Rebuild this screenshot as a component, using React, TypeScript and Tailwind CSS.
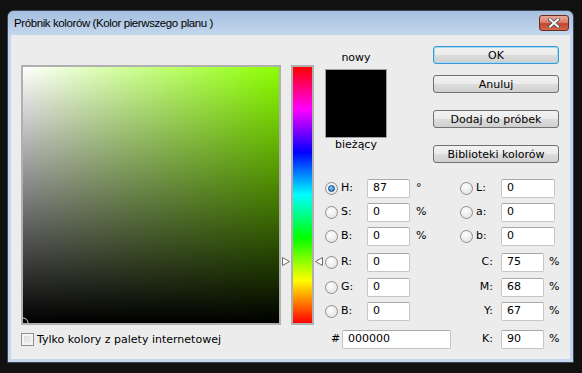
import React from 'react';

const font = { fontFamily: '"DejaVu Sans", Tahoma, sans-serif' };
const titleFont = { fontFamily: '"Liberation Sans", Arial, sans-serif' };

function Radio({ checked = false }: { checked?: boolean }) {
  return (
    <span className="w-[13px] h-[13px] rounded-full border border-[#8f8f8f] bg-[radial-gradient(circle_at_40%_35%,#ffffff,#dcdcdc)] flex items-center justify-center shrink-0">
      {checked && <span className="w-[7px] h-[7px] rounded-full bg-[radial-gradient(circle_at_40%_35%,#8fd3ff,#1565b8)] border border-[#0d4a8a]" />}
    </span>
  );
}

function Field({ value, w = 43 }: { value: string; w?: number }) {
  return (
    <div
      className="h-[19px] bg-white border border-[#c6c6c6] border-t-[#a8a8a8] rounded-[2px] flex items-center pl-[5px] text-black"
      style={{ width: w }}
    >
      {value}
    </div>
  );
}

function Button({ label, focused = false, mt }: { label: string; focused?: boolean; mt: string }) {
  return (
    <div
      className={`${mt} w-[126px] h-[18px] rounded-[3px] border ${focused ? 'border-[#3c9ad4] shadow-[inset_0_0_0_1px_#9fd9f6]' : 'border-[#707070]'} bg-[linear-gradient(to_bottom,#f2f2f2_0%,#ebebeb_50%,#dddddd_51%,#cfcfcf_100%)] flex items-center justify-center text-black leading-none`}
    >
      {label}
    </div>
  );
}

export default function App() {
  return (
    <div className="w-[582px] h-[373px] bg-[#111111] pl-[8px] pt-[11px]" style={font}>
      <div className="w-[565px] h-[351px] rounded-t-[6px] bg-[#c3d7ee] flex flex-col shadow-[0_0_0_1px_#3a4656]">
        {/* Title bar */}
        <div className="h-[24px] rounded-t-[6px] bg-[linear-gradient(to_bottom,#a4bfdd,#b7cde7_60%,#c3d7ee)] flex items-start justify-between pl-[6px] pr-[4px]">
          <span className="text-[11.5px] tracking-[-0.4px] text-black mt-[5px] leading-[14px]" style={titleFont}>Próbnik kolorów (Kolor pierwszego planu )</span>
          <div className="mt-[4px] w-[30px] h-[16px] rounded-[3px] border border-[#6d2a20] bg-[linear-gradient(to_bottom,#e7a897_0%,#d9806b_45%,#c3452d_55%,#cf6a50_100%)] flex items-center justify-center">
            <svg width="12" height="10" viewBox="0 0 12 10">
              <path d="M2 1.5 L10 8.5 M10 1.5 L2 8.5" stroke="#4a4a4a" strokeWidth="3.6" strokeLinecap="square" />
              <path d="M2 1.5 L10 8.5 M10 1.5 L2 8.5" stroke="#ffffff" strokeWidth="2" strokeLinecap="square" />
            </svg>
          </div>
        </div>

        {/* Client */}
        <div className="mx-[3px] h-[324px] bg-[#ececec] flex text-[11px] text-black">
          {/* Color field */}
          <div className="ml-[10px] pt-[30px] flex flex-col">
            <div className="w-[260px] h-[260px] border-2 border-[#b0b0b0] relative overflow-hidden bg-[linear-gradient(to_top,#000000,rgba(0,0,0,0)),linear-gradient(to_right,#ffffff,#8cff00)]">
              <svg className="absolute left-[-6px] bottom-[-6px]" width="12" height="12" viewBox="0 0 12 12">
                <circle cx="6" cy="6" r="5" fill="none" stroke="#d8d8d8" strokeWidth="1" />
              </svg>
            </div>
            <div className="mt-[8px] flex items-center gap-[3px]">
              <span className="w-[13px] h-[13px] border border-[#8f8f8f] bg-[linear-gradient(to_bottom_right,#d8d8d8,#f6f6f6)] shadow-[inset_0_0_0_2px_#f4f4f4]" />
              <span className="leading-[13px]">Tylko kolory z palety internetowej</span>
            </div>
          </div>

          {/* Hue bar */}
          <div className="ml-[10px] pt-[30px]">
            <div className="relative w-[23px] h-[260px] border-2 border-[#b0b0b0] bg-[linear-gradient(to_bottom,#ff0000_0%,#ff00ff_16.67%,#0000ff_33.33%,#00ffff_50%,#00ff00_66.67%,#ffff00_83.33%,#ff0000_100%)]">
              <svg className="absolute left-[-11px] top-[190px]" width="8" height="9" viewBox="0 0 8 9">
                <path d="M0.5 0.5 L0.5 8.5 L7.5 4.5 Z" fill="#ffffff" stroke="#6a6a6a" />
              </svg>
              <svg className="absolute right-[-11px] top-[190px]" width="8" height="9" viewBox="0 0 8 9">
                <path d="M7.5 0.5 L7.5 8.5 L0.5 4.5 Z" fill="#ffffff" stroke="#6a6a6a" />
              </svg>
            </div>
          </div>

          {/* Right area */}
          <div className="ml-[11px] pt-[11px] flex flex-col">
            <div className="flex items-start">
              <div className="mt-[5px] w-[62px] flex flex-col items-center">
                <span className="h-[14px] leading-[14px]">nowy</span>
                <div className="mt-[4px] w-[62px] h-[69px] border border-[#a0a0a0] bg-black" />
                <span className="h-[14px] leading-[14px]">bieżący</span>
              </div>
              <div className="ml-[46px] flex flex-col">
                <Button label="OK" focused mt="mt-0" />
                <Button label="Anuluj" mt="mt-[11px]" />
                <Button label="Dodaj do próbek" mt="mt-[17px]" />
                <Button label="Biblioteki kolorów" mt="mt-[17px]" />
              </div>
            </div>

            <div className="mt-[16px] flex flex-col">
              {[
                { l: 'H', lv: '87', u: '°', r: 'L', rv: '0', checked: true, mt: 'mt-0' },
                { l: 'S', lv: '0', u: '%', r: 'a', rv: '0', mt: 'mt-[5px]' },
                { l: 'B', lv: '0', u: '%', r: 'b', rv: '0', mt: 'mt-[5px]' },
              ].map(row => (
                <div key={row.l + row.r} className={`${row.mt} flex items-center h-[19px]`}>
                  <div className="w-[135px] flex items-center">
                    <Radio checked={row.checked} />
                    <span className="ml-[3px] w-[26px]">{row.l}:</span>
                    <Field value={row.lv} />
                    <span className="ml-[6px]">{row.u}</span>
                  </div>
                  <div className="flex items-center">
                    <Radio />
                    <span className="ml-[3px] w-[25px]">{row.r}:</span>
                    <Field value={row.rv} w={54} />
                  </div>
                </div>
              ))}
              {[
                { l: 'R', lv: '0', r: 'C', rv: '75', mt: 'mt-[7px]' },
                { l: 'G', lv: '0', r: 'M', rv: '68', mt: 'mt-[6px]' },
                { l: 'B', lv: '0', r: 'Y', rv: '67', mt: 'mt-[5px]' },
              ].map(row => (
                <div key={row.l + row.r} className={`${row.mt} flex items-center h-[19px]`}>
                  <div className="w-[135px] flex items-center">
                    <Radio />
                    <span className="ml-[3px] w-[26px]">{row.l}:</span>
                    <Field value={row.lv} />
                  </div>
                  <div className="w-[41px] flex justify-end pr-[8px]">{row.r}:</div>
                  <Field value={row.rv} />
                  <span className="ml-[5px]">%</span>
                </div>
              ))}
              <div className="mt-[9px] flex items-center h-[19px]">
                <div className="w-[135px] flex items-center">
                  <span className="ml-[6px] w-[11px]">#</span>
                  <Field value="000000" w={109} />
                </div>
                <div className="w-[41px] flex justify-end pr-[8px]">K:</div>
                <Field value="90" />
                <span className="ml-[5px]">%</span>
              </div>
            </div>
          </div>
        </div>
      </div>
    </div>
  );
}
